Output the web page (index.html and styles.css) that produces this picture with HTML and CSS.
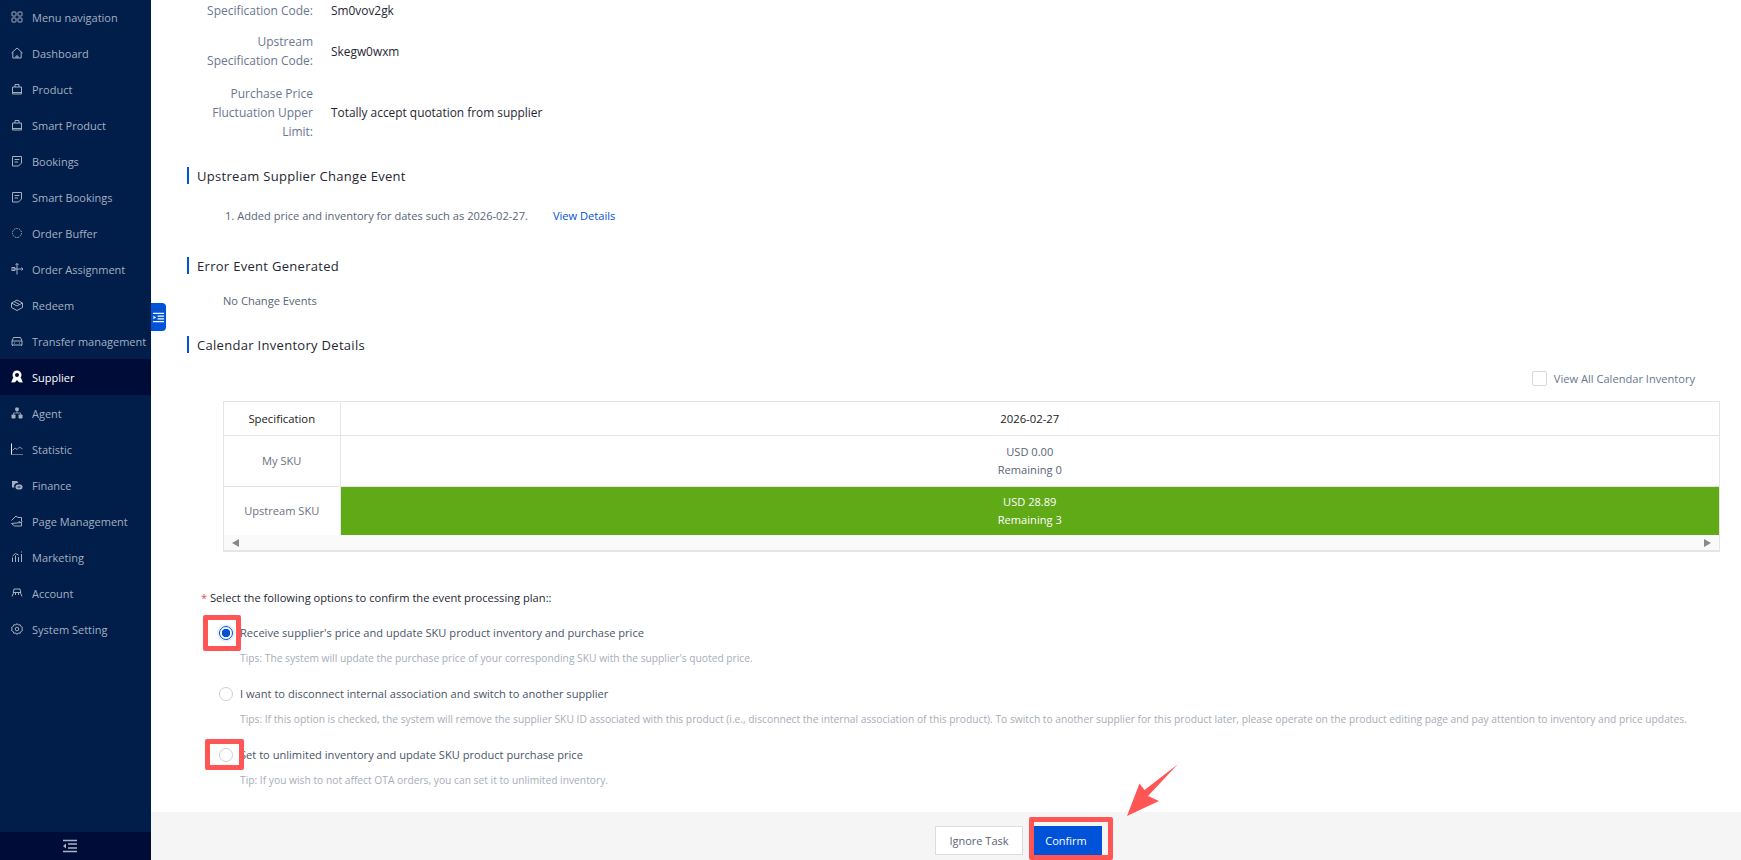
FILE: index.html
```html
<!DOCTYPE html>
<html lang="en">
<head>
<meta charset="utf-8">
<title>Supplier task</title>
<link rel="stylesheet" href="styles.css">
</head>
<body>
<div class="app">
  <aside class="sidebar">
    <nav class="menu">
      <a class="item"><svg class="ico" viewBox="0 0 14 14"><rect x="2" y="2" width="4" height="4" rx=".6"/><rect x="8" y="2" width="4" height="4" rx=".6"/><rect x="2" y="8" width="4" height="4" rx=".6"/><rect x="8" y="8" width="4" height="4" rx=".6"/></svg><span>Menu navigation</span></a>
      <a class="item"><svg class="ico" viewBox="0 0 14 14"><path d="M1.500 7 7 2l5.500 5M2.800 6v6h8.400V6M6 12v-2h2v2"/></svg><span>Dashboard</span></a>
      <a class="item"><svg class="ico" viewBox="0 0 14 14"><path d="M2.500 5h9v7h-9zM5 5V2.500h4V5M2.500 10.500h9"/></svg><span>Product</span></a>
      <a class="item"><svg class="ico" viewBox="0 0 14 14"><path d="M2.500 5h9v7h-9zM5 5V2.500h4V5M2.500 10.500h9"/></svg><span>Smart Product</span></a>
      <a class="item"><svg class="ico" viewBox="0 0 14 14"><path d="M2.500 2.500h9V9L8.500 12h-6zM4.500 5.500h5M4.500 8h3.500"/></svg><span>Bookings</span></a>
      <a class="item"><svg class="ico" viewBox="0 0 14 14"><path d="M2.500 2.500h9V9L8.500 12h-6zM4.500 5.500h5M4.500 8h3.500"/></svg><span>Smart Bookings</span></a>
      <a class="item"><svg class="ico" viewBox="0 0 14 14"><circle cx="7" cy="7" r="4.500" stroke-dasharray="1.500 1"/></svg><span>Order Buffer</span></a>
      <a class="item"><svg class="ico" viewBox="0 0 14 14"><path d="M7 1.500V12.500M5.500 3 7 1.500 8.500 3M1 7h12M11.500 5.500 13 7l-1.500 1.500M1.500 5.500h3.500v3H1.500"/></svg><span>Order Assignment</span></a>
      <a class="item"><svg class="ico" viewBox="0 0 14 14"><path d="M1.500 5 7 2l5.500 3v4.500L7 12.500 1.500 9.500zM1.500 5 7 8l5.500-3M4 3.500 9.500 6.500"/></svg><span>Redeem</span></a>
      <a class="item"><svg class="ico" viewBox="0 0 14 14"><path d="M2 7 3.500 3.500h7L12 7v4H2zM2 7h10M2.500 11v1M11.500 11v1M4 9h1M9 9h1"/></svg><span>Transfer management</span></a>
      <a class="item active"><svg class="ico solid" viewBox="0 0 14 14"><circle cx="7" cy="5" r="4.500"/><path d="M3 8 1.200 12.500 5 12.200 7 10l2 2.200 3.800.3L11 8z"/><circle class="cut" cx="7" cy="5" r="2"/></svg><span>Supplier</span></a>
      <a class="item"><svg class="ico solid" viewBox="0 0 14 14"><rect x="5.200" y="1.500" width="3.600" height="3.500" rx="1"/><rect x="1.500" y="8.500" width="4" height="4" rx=".8"/><rect x="8.500" y="8.500" width="4" height="4" rx=".8"/><path class="thin" d="M7 5v2M3.500 8.500V7h7v1.500"/></svg><span>Agent</span></a>
      <a class="item"><svg class="ico" viewBox="0 0 14 14"><path d="M2.500 8.500 5 6l2 1.500L9.500 5l3 2" stroke-width=".8"/><path d="M1 12.500h12" stroke-width=".6"/><path class="bright" d="M1.500 1.500v11"/></svg><span>Statistic</span></a>
      <a class="item"><svg class="ico solid" viewBox="0 0 14 14"><path d="M2 3h5l1.500 2H7a3 3 0 0 0-2.500 4.500H2z"/><rect x="5.500" y="6.500" width="7" height="5" rx="2.500"/><path class="cutline" d="M7.500 9h3"/></svg><span>Finance</span></a>
      <a class="item"><svg class="ico" viewBox="0 0 14 14"><path d="M1.500 6.500 6 2l2 1.500h3.500V7M9 7a1.500 1.500 0 1 0 3 0M11.500 8.500V12h-7L1.500 9.500z"/></svg><span>Page Management</span></a>
      <a class="item"><svg class="ico" viewBox="0 0 14 14"><path d="M2.500 12V7.500M5.500 12V5.500M8.500 12V7M11.500 12V4M2.500 6 5.500 3.500 8.500 5M11 2h1"/></svg><span>Marketing</span></a>
      <a class="item"><svg class="ico" viewBox="0 0 14 14"><path d="M4 3h6l.800 3.500H3.200zM3.200 6.500h7.600M2 10.500 3.500 7M12 10.500 10.500 7M5.500 7v2M8.500 7v2"/></svg><span>Account</span></a>
      <a class="item"><svg class="ico" viewBox="0 0 14 14"><path d="M7 1.500 8.200 3l1.900-.3.700 1.800 1.700.9-.5 1.600.5 1.600-1.700.9-.7 1.800-1.900-.3L7 12.500 5.800 11l-1.900.3-.7-1.800-1.700-.9L2 7l-.5-1.600 1.700-.9.700-1.800L5.800 3z"/><circle cx="7" cy="7" r="1.800"/></svg><span>System Setting</span></a>
    </nav>
    <div class="collapse-bar"><svg class="bar-ico" viewBox="0 0 16 14"><path d="M1 1.500h14M6 5h9M6 9h9M1 12.500h14"/><path class="fill" d="M4 4.500v5L1 7z"/></svg></div>
  </aside>

  <main class="main">
    <div class="scroll">
      <dl class="spec">
        <div class="spec-row"><dt>Specification Code:</dt><dd>Sm0vov2gk</dd></div>
        <div class="spec-row"><dt>Upstream<br>Specification Code:</dt><dd>Skegw0wxm</dd></div>
        <div class="spec-row"><dt>Purchase Price<br>Fluctuation Upper<br>Limit:</dt><dd>Totally accept quotation from supplier</dd></div>
      </dl>

      <h2 class="title t-change">Upstream Supplier Change Event</h2>
      <p class="event"><span>1. Added price and inventory for dates such as 2026-02-27.</span><a class="link">View Details</a></p>

      <h2 class="title t-error">Error Event Generated</h2>
      <p class="none">No Change Events</p>

      <h2 class="title t-cal">Calendar Inventory Details</h2>
      <div class="view-all"><span class="check"></span><span>View All Calendar Inventory</span></div>

      <div class="table-wrap">
        <table class="cal">
          <colgroup><col class="c1"><col></colgroup>
          <thead><tr><th>Specification</th><th>2026-02-27</th></tr></thead>
          <tbody>
            <tr class="r1"><td class="name">My SKU</td><td class="cell">USD 0.00<br>Remaining 0</td></tr>
            <tr class="r2"><td class="name">Upstream SKU</td><td class="cell green">USD 28.89<br>Remaining 3</td></tr>
          </tbody>
        </table>
        <div class="hbar"><i class="arr left"></i><i class="arr right"></i></div>
      </div>

      <p class="question"><b class="star">*</b>Select the following options to confirm the event processing plan::</p>
      <div class="opts">
        <div class="opt"><span class="radio on"></span><span class="opt-text">Receive supplier's price and update SKU product inventory and purchase price</span></div>
        <p class="tip">Tips: The system will update the purchase price of your corresponding SKU with the supplier's quoted price.</p>
        <div class="opt"><span class="radio"></span><span class="opt-text">I want to disconnect internal association and switch to another supplier</span></div>
        <p class="tip">Tips: If this option is checked, the system will remove the supplier SKU ID associated with this product (i.e., disconnect the internal association of this product). To switch to another supplier for this product later, please operate on the product editing page and pay attention to inventory and price updates.</p>
        <div class="opt"><span class="radio"></span><span class="opt-text">Set to unlimited inventory and update SKU product purchase price</span></div>
        <p class="tip">Tip: If you wish to not affect OTA orders, you can set it to unlimited inventory.</p>
      </div>
    </div>
    <footer class="footer">
      <button class="btn">Ignore Task</button>
      <button class="btn primary">Confirm</button>
    </footer>
  </main>
</div>

<div class="tab"><svg viewBox="0 0 14 14"><path d="M1 2.500h12M6 5.500h7M6 8.500h7M1 11.500h12"/><path class="fill" d="M1.500 5v4L4.500 7z"/></svg></div>
<div class="mark m1"></div>
<div class="mark m2"></div>
<div class="mark m3"></div>
<svg class="arrow" viewBox="0 0 60 60"><path d="M0 53 12.500 20.500 17.500 27 50.500 1.500 21 33 32 38z"/></svg>
</body>
</html>
```
FILE: styles.css
```css
* { box-sizing: border-box; }
html, body { margin: 0; height: 100%; overflow: hidden; }
body { font-family: "Open Sans", "Noto Sans", sans-serif; font-size: 12px; color: #333; background: #fff; }
.app { display: flex; height: 860px; }

/* sidebar */
.sidebar { width: 151px; flex: none; background: #001e49; display: flex; flex-direction: column; }
.menu { margin-top: -1px; flex: 1; }
.item { display: flex; align-items: center; height: 36px; padding-left: 10px; gap: 8px; color: #a5afc2; font-size: 11px; white-space: nowrap; }
.item.active { background: #000c38; color: #fff; }
.ico { width: 14px; height: 14px; flex: none; fill: none; stroke: #a5afc2; stroke-width: 1; }
.ico.solid { fill: #a5afc2; stroke: none; }
.item.active .ico.solid { fill: #fff; }
.ico .cut { fill: #000c38; }
.ico .thin { fill: none; stroke: #a5afc2; stroke-width: .8; }
.ico .cutline { fill: none; stroke: #001e49; stroke-width: 1; }
.ico .bright { stroke: #e6e9f0; }
.collapse-bar { height: 28px; background: #000c38; display: flex; align-items: center; justify-content: center; padding-right: 11px; }
.bar-ico { width: 16px; height: 14px; fill: none; stroke: #a9b2c4; stroke-width: 1.300; }
.bar-ico .fill { fill: #a9b2c4; stroke: none; }

/* main */
.main { flex: 1; min-width: 0; display: flex; flex-direction: column; }
.scroll { flex: 1; min-height: 0; overflow: hidden; padding-left: 36px; }
.spec { margin: 1px 0 0; display: flex; flex-direction: column; gap: 12px; }
.spec-row { display: flex; align-items: center; line-height: 19px; }
.spec-row + .spec-row + .spec-row { margin-top: 2px; }
.spec dt { width: 126px; margin-left: 0; text-align: right; color: #6b7690; flex: none; font-size: 12px; }
.spec dd { margin: 0 0 0 18px; color: #1f2733; font-size: 11.9px; }

.title { margin: 0; font-weight: 400; font-size: 13px; line-height: 18px; color: #1f2733; border-left: 2px solid #0052d9; padding-left: 8px; letter-spacing: .3px; height: 17px; display: flex; align-items: center; }
.t-change { margin-top: 26px; }
.t-error { margin-top: 32px; }
.t-cal { margin-top: 26px; }

.event { margin: 22px 0 0 38px; line-height: 19px; display: flex; color: #5a6478; font-size: 11.1px; }
.link { margin-left: 25px; color: #0052d9; }
.none { margin: 17px 0 0 36px; line-height: 19px; color: #5a6478; font-size: 11.1px; }

.view-all { display: flex; align-items: center; justify-content: flex-end; gap: 7px; margin: 18px 46px 0 0; line-height: 15px; color: #6b7690; font-size: 11.1px; }
.check { width: 15px; height: 15px; border: 1px solid #d9d9d9; border-radius: 2px; background: #fff; }

.table-wrap { margin: 15px 21px 0 36px; border: 1px solid #e5e5e5; border-bottom-width: 2px; }
.cal { width: 100%; border-collapse: collapse; table-layout: fixed; font-size: 11.1px; text-align: center; }
.cal .c1 { width: 116px; }
.cal th { height: 33px; font-weight: 400; color: #1a1a1a; border-bottom: 1px solid #e5e5e5; font-size: 11.300px; }
.cal th:first-child, .cal .name { border-right: 1px solid #e5e5e5; }
.r1 td { height: 51px; border-bottom: 1px solid #e5e5e5; }
.r2 td { height: 49px; }
.name { color: #6b7280; }
.cell { color: #5a6478; line-height: 18px; }
.cell.green { background: #60a917; color: #fff; }
.hbar { height: 15px; background: #fafafa; display: flex; align-items: center; justify-content: space-between; padding: 0 8px; }
.arr { width: 0; height: 0; border-top: 4px solid transparent; border-bottom: 4px solid transparent; }
.arr.left { border-right: 7px solid #8a8a8a; }
.arr.right { border-left: 7px solid #8a8a8a; }

.question { margin: 36px 0 0 14px; line-height: 19px; color: #1f2733; font-size: 11.150px; display: flex; align-items: center; }
.star { color: #e34d59; font-weight: 400; width: 9px; flex: none; }
.opts { margin: 16px 0 0 32px; }
.opt { display: flex; align-items: center; gap: 7px; height: 19px; color: #4a5468; font-size: 11.1px; }
.radio { width: 14px; height: 14px; border: 1px solid #d0d0d0; border-radius: 50%; background: #fff; flex: none; position: relative; }
.radio.on { border-color: #0052d9; box-shadow: 0 0 0 2px #e8effc; background: radial-gradient(circle, #0052d9 0 4px, #fff 4.500px); }
.opt-text { white-space: nowrap; }
.tip { margin: 7px 0 17px 21px; line-height: 18px; color: #a8adb8; font-size: 10.25px; white-space: nowrap; }
.tip:last-child { margin-bottom: 0; }

.footer { height: 48px; flex: none; background: #f5f5f5; display: flex; align-items: flex-start; justify-content: center; gap: 7px; padding: 14px 0 0 145px; }
.btn { height: 29px; width: 88px; border: 1px solid #dcdcdc; background: #fff; color: #5a6478; font: inherit; font-size: 11px; padding: 0; }
.btn.primary { width: 72px; background: #0052d9; border-color: #0052d9; color: #fff; }

/* overlays */
.tab { position: absolute; left: 151px; top: 303px; width: 15px; height: 28px; background: #0052d9; border-radius: 0 4px 4px 0; display: flex; align-items: center; justify-content: center; }
.tab svg { width: 13px; height: 13px; fill: none; stroke: #fff; stroke-width: 1.200; }
.tab .fill { fill: #fff; stroke: none; }
.mark { position: absolute; border: 5px solid #ff5555; border-radius: 2px; }
.m1 { left: 203px; top: 615px; width: 38px; height: 36px; }
.m2 { left: 205px; top: 739px; width: 39px; height: 31px; }
.m3 { left: 1029px; top: 817px; width: 84px; height: 43px; }
.arrow { position: absolute; left: 1127px; top: 763px; width: 60px; height: 60px; fill: #ff5555; }
```
